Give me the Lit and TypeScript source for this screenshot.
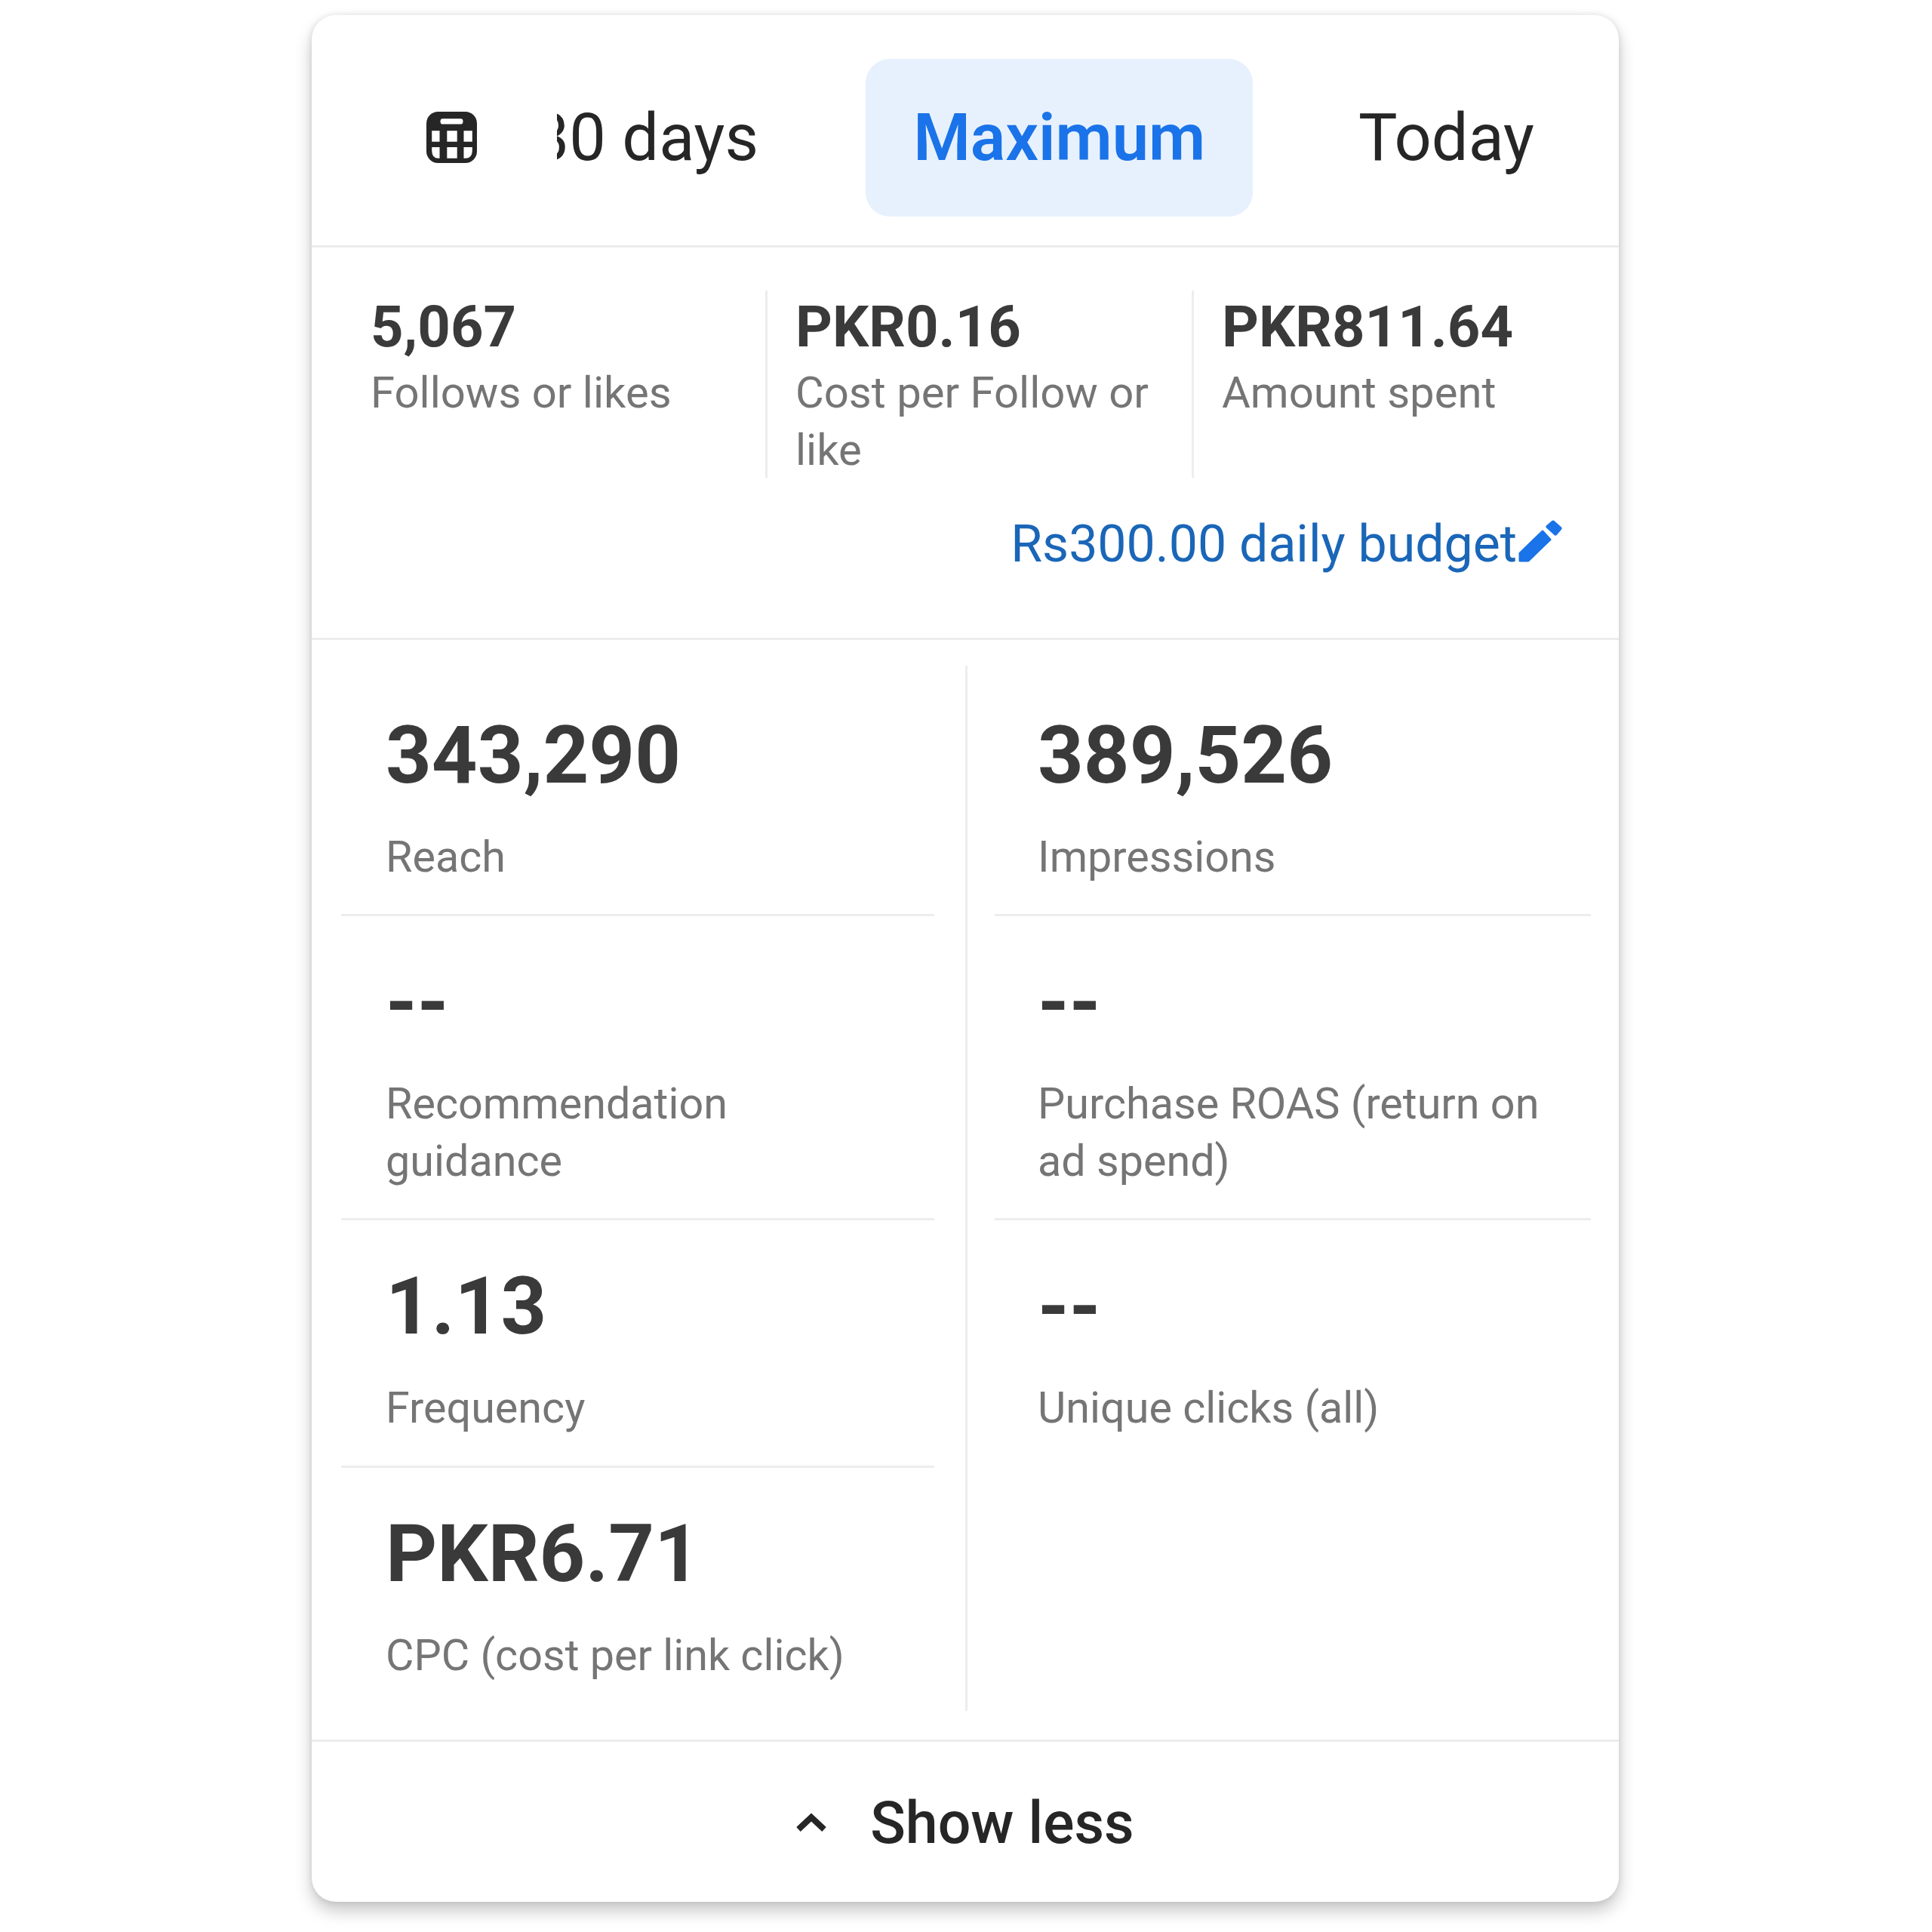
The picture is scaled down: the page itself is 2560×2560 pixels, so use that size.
import { LitElement, css, html, svg } from "lit";
import { customElement } from "lit/decorators.js";

const summary = [
  { value: "5,067", label: "Follows or likes" },
  { value: "PKR0.16", label: "Cost per Follow or like" },
  { value: "PKR811.64", label: "Amount spent" },
];

const leftMetrics = [
  { value: "343,290", label: "Reach" },
  { value: "--", label: "Recommendation guidance" },
  { value: "1.13", label: "Frequency" },
  { value: "PKR6.71", label: "CPC (cost per link click)" },
];

const rightMetrics = [
  { value: "389,526", label: "Impressions" },
  { value: "--", label: "Purchase ROAS (return on ad spend)" },
  { value: "--", label: "Unique clicks (all)" },
];

const calendarIcon = svg`<svg class="calendar" viewBox="0 0 65 66" width="67" height="68">
  <rect width="65" height="66" rx="15" fill="#262626"/>
  <rect x="18" y="9" width="29" height="7" rx="3" fill="#fff"/>
  <path fill="#fff" d="M7 24.500h10v14H7zM26.500 24.500h13v14h-13zM48 24.500h11v14H48zM26.500 45.500h13V60h-13zM7 45.500h10V60h-1.500Q7 60 7 50zM48 45.500h11V50Q59 60 50 60h-2z"/>
</svg>`;

const pencilIcon = svg`<svg class="pencil" viewBox="0 0 58 56" width="58" height="56">
  <path fill="#1a73e8" stroke="#1a73e8" stroke-width="3" stroke-linejoin="round" d="M2 54V44L32 15 42 26 13 54z"/>
  <path fill="#1a73e8" stroke="#1a73e8" stroke-width="5" stroke-linejoin="round" d="M39 9 46 3 55 11 49 18z"/>
</svg>`;

const chevronIcon = svg`<svg class="chevron" viewBox="0 0 40 26" width="40" height="26">
  <path fill="none" stroke="#262626" stroke-width="8" d="M3 23 20 7 37 23"/>
</svg>`;

@customElement("app-root")
export class AppRoot extends LitElement {
  static styles = css`
    :host {
      display: block;
      width: 2560px;
      height: 2560px;
      background: #fff;
      padding-top: 20px;
      box-sizing: border-box;
      font-family: Roboto, sans-serif;
    }
    .card {
      width: 1732px;
      height: 2500px;
      margin-left: 413px;
      box-sizing: border-box;
      background: #fff;
      border-radius: 32px;
      box-shadow: 0 12px 22px rgba(0, 0, 0, 0.22), 0 0 8px rgba(0, 0, 0, 0.1);
      display: flex;
      flex-direction: column;
    }
    .tabs {
      display: flex;
      align-items: center;
      height: 308px;
      box-sizing: border-box;
      padding: 58px 48px 39px 0;
      border-bottom: 3px solid #ececec;
    }
    .calendar {
      flex: none;
      margin: 0 106px 0 152px;
    }
    .scroller {
      flex: 1;
      min-width: 0;
      display: flex;
      justify-content: flex-end;
      gap: 76px;
      overflow: hidden;
    }
    .tab {
      flex: none;
      height: 209px;
      padding: 0 64px;
      border-radius: 32px;
      display: flex;
      align-items: center;
      font-size: 86.500px;
      color: #262626;
    }
    .tab.active {
      margin-left: 2px;
      padding: 0 63px;
      background: #e7f1fd;
      color: #1a73e8;
      font-weight: 600;
    }
    .overview {
      height: 520px;
      box-sizing: border-box;
      padding: 57px 36px 0;
      border-bottom: 3px solid #ececec;
    }
    .summary {
      display: grid;
      grid-template-columns: 565px 565px 1fr;
    }
    .stat {
      height: 248px;
      padding: 0 20px 0 37px;
      box-sizing: border-box;
    }
    .stat:first-child {
      padding-left: 42px;
    }
    .stat + .stat {
      border-left: 3px solid #ededed;
    }
    .stat .value {
      font-size: 76px;
      font-weight: 700;
      line-height: 76px;
      margin-top: 10px;
      color: #3a3a3a;
    }
    .stat .label {
      font-size: 58px;
      line-height: 76px;
      margin-top: 11px;
      color: #757575;
    }
    .budget {
      display: flex;
      justify-content: flex-end;
      align-items: center;
      padding-right: 39px;
      margin-top: 50px;
      font-size: 68px;
      line-height: 76px;
      color: #1a66b8;
    }
    .pencil {
      flex: none;
      margin-left: 2px;
      margin-top: -8px;
    }
    .metrics {
      height: 1460px;
      box-sizing: border-box;
      padding: 34px 37px 38px 39px;
      display: grid;
      grid-template-columns: 827px 1fr;
      border-bottom: 3px solid #ececec;
    }
    .column {
      display: flex;
      flex-direction: column;
      padding-right: 41px;
    }
    .column + .column {
      border-left: 3px solid #ededed;
      padding: 0 0 0 36px;
    }
    .metric {
      padding: 49px 45px 37px 59px;
      border-bottom: 3px solid #ededed;
    }
    .column + .column .metric {
      padding-left: 57px;
    }
    .metric:first-child {
      padding-top: 54px;
    }
    .metric:nth-child(3) {
      padding-bottom: 38px;
    }
    .metric:last-child {
      border-bottom: 0;
    }
    .column:first-child .metric:last-child {
      padding-bottom: 0;
    }
    .metric .value {
      font-size: 106px;
      font-weight: 700;
      line-height: 130px;
      color: #3a3a3a;
    }
    .metric .label {
      font-size: 57.500px;
      line-height: 76px;
      margin-top: 32px;
      color: #757575;
    }
    .footer {
      flex: 1;
      display: flex;
      align-items: center;
      justify-content: center;
      gap: 58px;
      padding-top: 4px;
      font-size: 77px;
      font-weight: 500;
      color: #262626;
    }
    .chevron {
      margin-top: -4px;
    }
  `;

  renderMetric(m: { value: string; label: string }) {
    return html`<div class="metric">
      <div class="value">${m.value}</div>
      <div class="label">${m.label}</div>
    </div>`;
  }

  render() {
    return html`
      <div class="card">
        <div class="tabs">
          ${calendarIcon}
          <div class="scroller">
            <div class="tab">30 days</div>
            <div class="tab active">Maximum</div>
            <div class="tab">Today</div>
          </div>
        </div>
        <div class="overview">
          <div class="summary">
            ${summary.map(
              (s) => html`<div class="stat">
                <div class="value">${s.value}</div>
                <div class="label">${s.label}</div>
              </div>`
            )}
          </div>
          <div class="budget">Rs300.00 daily budget${pencilIcon}</div>
        </div>
        <div class="metrics">
          <div class="column">${leftMetrics.map((m) => this.renderMetric(m))}</div>
          <div class="column">${rightMetrics.map((m) => this.renderMetric(m))}</div>
        </div>
        <div class="footer">${chevronIcon}<span>Show less</span></div>
      </div>
    `;
  }
}
